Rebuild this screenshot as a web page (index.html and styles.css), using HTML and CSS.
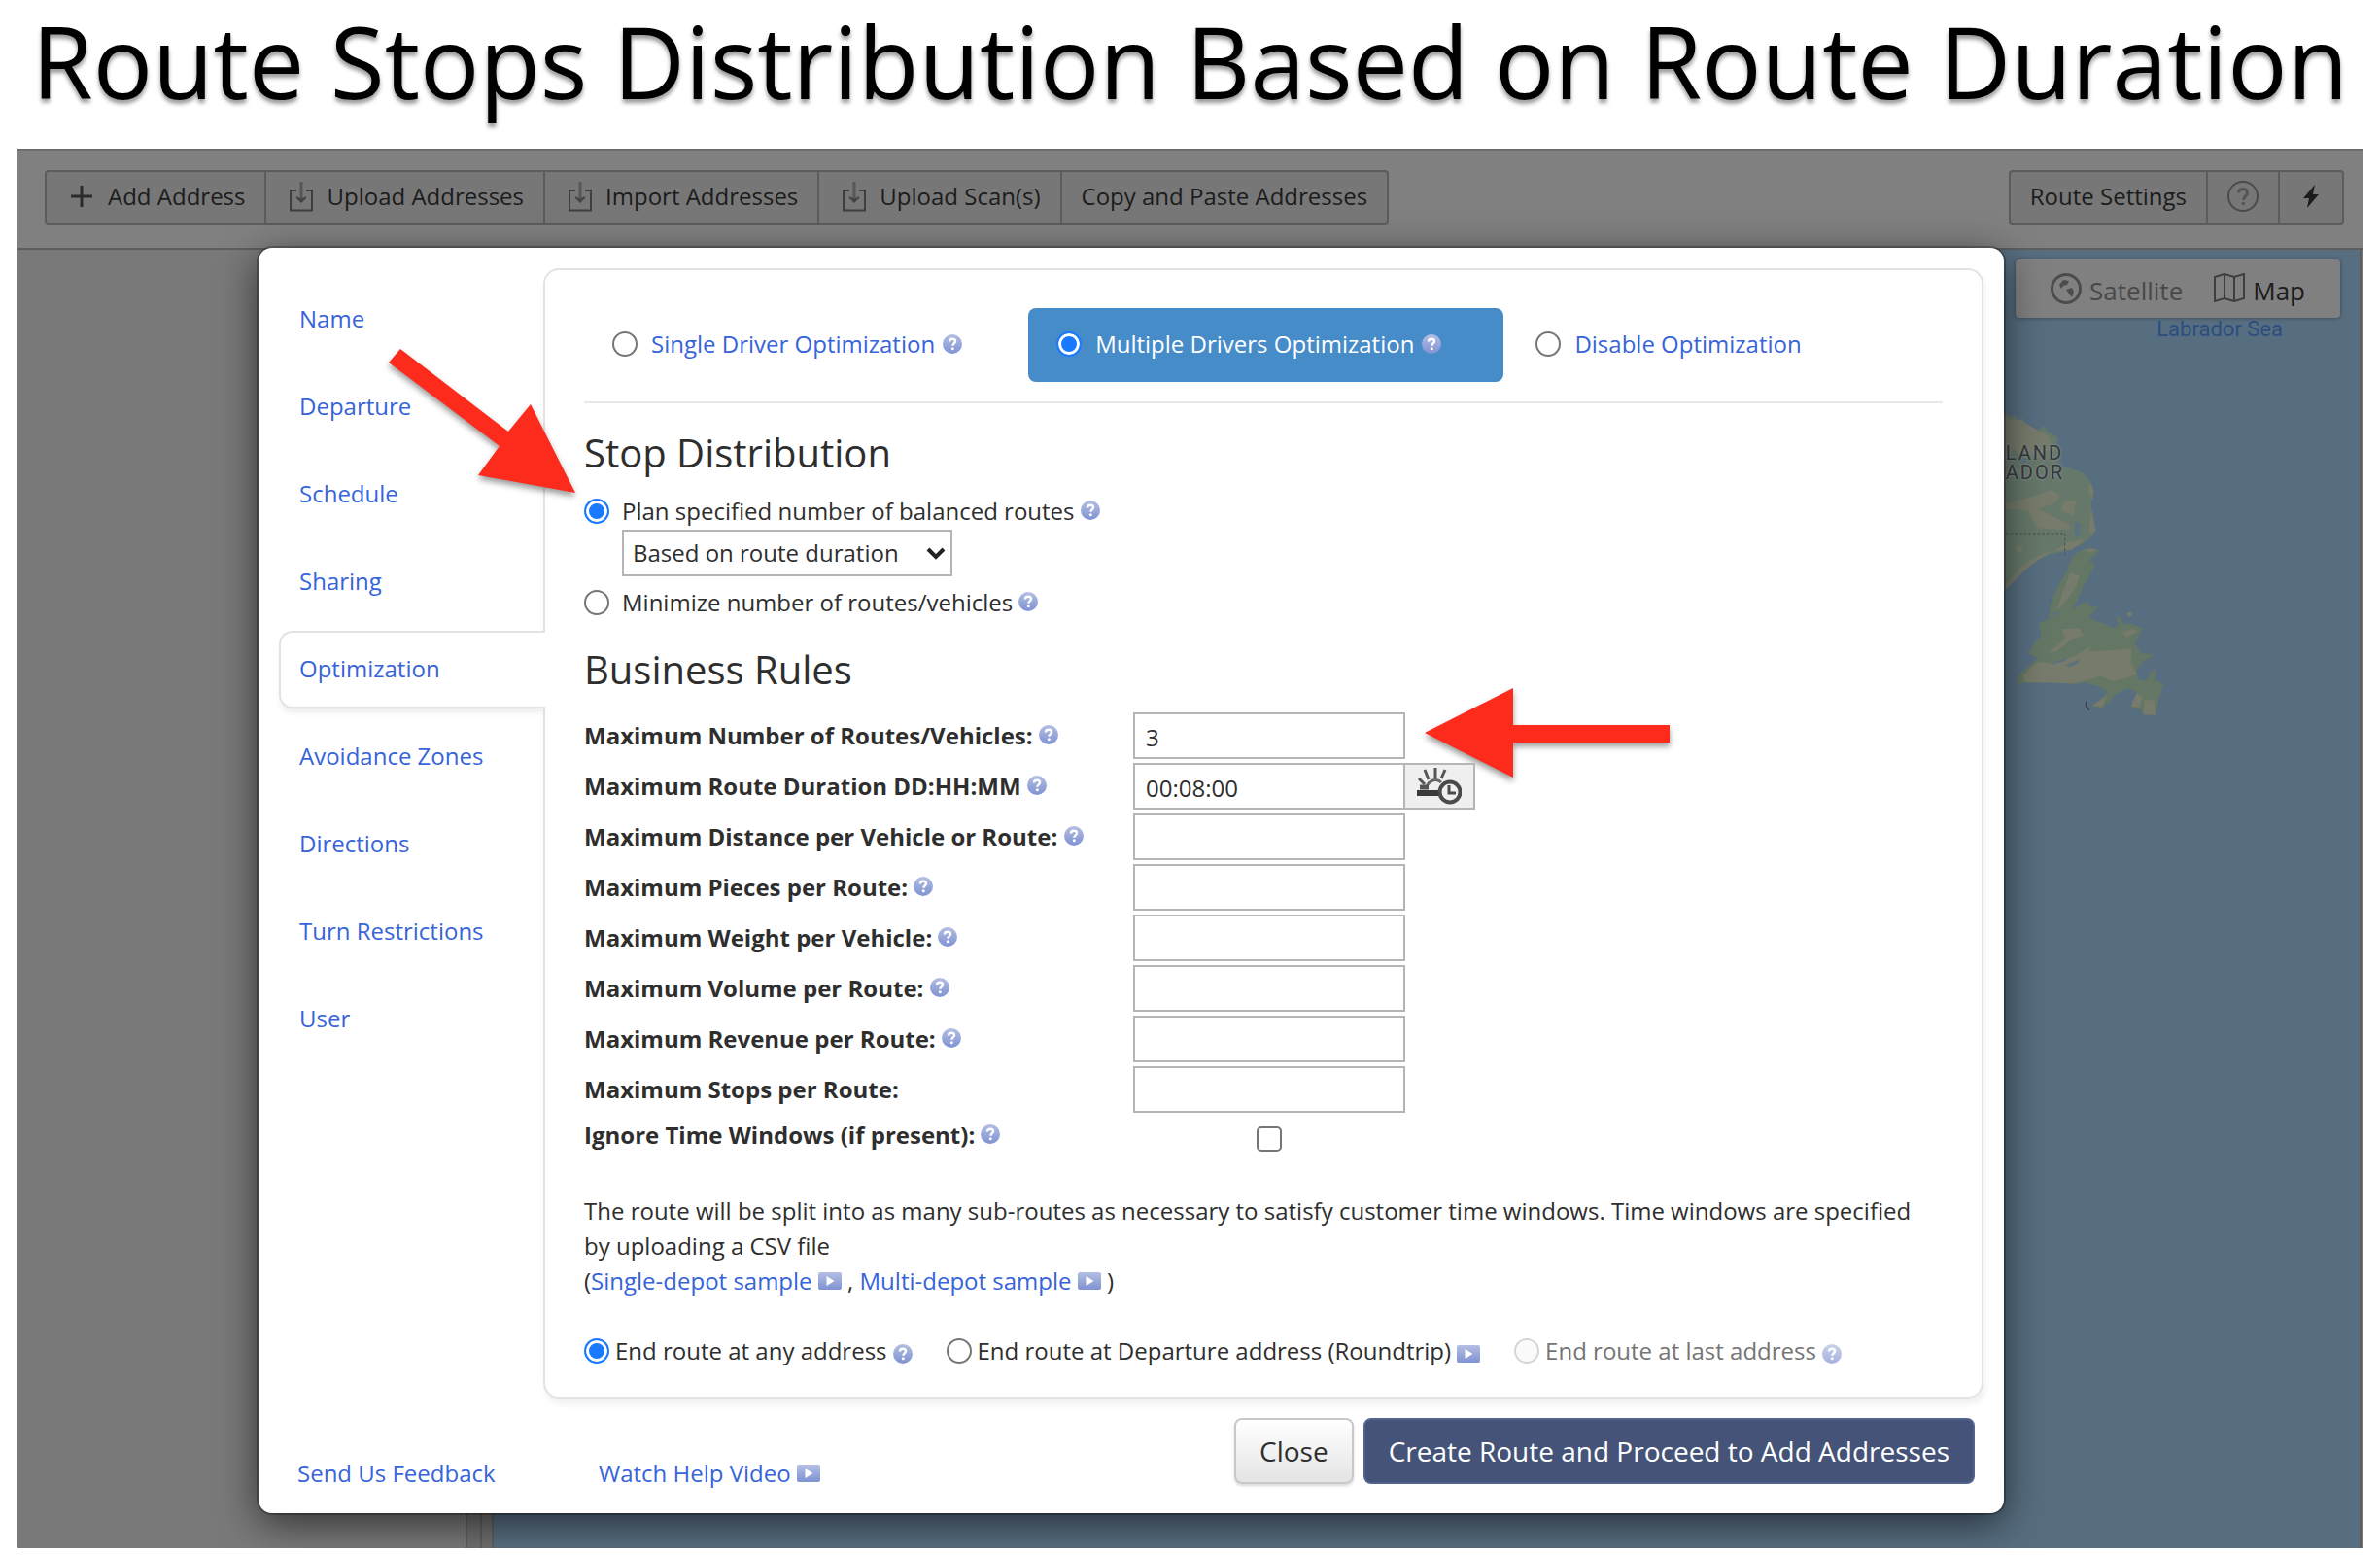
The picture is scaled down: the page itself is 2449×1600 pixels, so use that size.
FILE: index.html
```html
<!DOCTYPE html>
<html lang="en">
<head>
<meta charset="utf-8">
<title>Route Stops Distribution Based on Route Duration</title>
<link rel="stylesheet" href="styles.css">
</head>
<body>
<svg class="sprite" aria-hidden="true">
  <defs>
    <linearGradient id="badge-fill" x1="0" y1="0" x2="0" y2="1">
      <stop offset="0" stop-color="#b4bfe2"/>
      <stop offset="1" stop-color="#7f92d3"/>
    </linearGradient>
    <symbol id="help" viewBox="0 0 20 20">
      <circle cx="10" cy="10" r="10" fill="url(#badge-fill)"/>
      <path d="M7 7.6C7 5.6 8.3 4.8 10 4.8s3 .9 3 2.5c0 2-2.6 2.2-2.6 4.4" fill="none" stroke="#fff" stroke-width="2.4"/>
      <circle cx="10.3" cy="14.7" r="1.5" fill="#fff"/>
    </symbol>
    <symbol id="play" viewBox="0 0 24 18">
      <rect width="24" height="18" rx="2" fill="url(#badge-fill)"/>
      <path d="M8.500 4v10l8-5z" fill="#fff"/>
    </symbol>
    <symbol id="inbox" viewBox="0 0 26 32">
      <path d="M8 10H2v20.500h22V10h-6" fill="none" stroke="#3f3f3f" stroke-width="2"/>
      <path d="M13 1v18" stroke="#575757" stroke-width="3"/>
      <path d="M8 17l5 2.500 5-2.500-5 5z" fill="#444" stroke="#444" stroke-width="1.500"/>
    </symbol>
  </defs>
</svg>

<h1 class="title">Route Stops Distribution Based on Route Duration</h1>

<main class="app">
  <div class="backdrop">
    <header class="toolbar">
      <div class="button-group">
        <button type="button"><svg class="icon-plus" viewBox="0 0 22 22"><path d="M11 0v22M0 11h22" stroke="#2b2b2b" stroke-width="3"/></svg>Add Address</button>
        <button type="button"><svg class="icon-inbox"><use href="#inbox"/></svg>Upload Addresses</button>
        <button type="button"><svg class="icon-inbox"><use href="#inbox"/></svg>Import Addresses</button>
        <button type="button"><svg class="icon-inbox"><use href="#inbox"/></svg>Upload Scan(s)</button>
        <button type="button">Copy and Paste Addresses</button>
      </div>
      <div class="button-group">
        <button type="button">Route Settings</button>
        <button type="button" aria-label="Help"><svg class="icon-round" viewBox="0 0 32 32"><circle cx="16" cy="16" r="15" fill="none" stroke="#4b4b4b" stroke-width="2"/><path d="M11.500 12.500c0-3 2-4 4.500-4s4.500 1.300 4.500 4c0 3.500-4 3.500-4 7.500" fill="none" stroke="#555" stroke-width="3"/><circle cx="16.500" cy="23.500" r="1.800" fill="#555"/></svg></button>
        <button type="button" aria-label="Quick actions"><svg class="icon-bolt" viewBox="0 0 16 24"><path d="M12 0L0 14h6L4 24l12-14h-6z" fill="#1c1c1c"/></svg></button>
      </div>
    </header>
    <div class="workspace">
      <div class="route-list"></div>
      <div class="splitter"></div>
      <section class="map">
        <svg class="land" viewBox="300 510 540 890" preserveAspectRatio="none">
          <path d="M300 540L345 520L355 530L370 524L382 538L392 530L403 555L415 567L440 568L458 555L475 575L495 582L505 595L498 610L512 625L506 650L522 672L550 680L580 690L600 712L614 740L604 780L612 815L620 858L600 880L570 900L530 915L480 925L430 945L385 985L342 1026L300 1050z" fill="#66786a"/>
          <path d="M300 530L390 540L440 568L475 585L490 620L440 640L340 620L300 640zM340 780L420 760L480 740L510 755L490 780L440 795L530 835L545 855L440 850L410 800L345 795zM520 775L560 768L550 815L512 800zM600 715L614 742L608 770L596 735zM604 790L620 858L600 866zM530 890L590 880L545 912L495 915zM342 1010L390 960L440 930L490 915L440 942L390 980L342 1026zM370 900L395 902L390 920L375 916z" fill="#767b6b"/>
          <path d="M555 830l18 8-3 35-15 2zM385 655l25-8-10 20zM500 655l22 4-10 20z" fill="#5b7180"/>
          <path d="M342 865H524V928" fill="none" stroke="#4c554c" stroke-width="3" stroke-dasharray="8 6"/>
          <path d="M570 915L605 907L632 916L612 930L600 945L618 955L600 985L580 1020L562 1060L545 1085L580 1065L595 1060L603 1078L628 1075L612 1095L598 1105L620 1118L650 1125L672 1138L690 1130L682 1108L692 1105L705 1125L738 1128L765 1140L750 1165L740 1180L760 1212L795 1212L798 1218L765 1235L745 1260L752 1285L775 1290L790 1262L806 1258L800 1285L828 1300L815 1340L804 1388L765 1386L760 1372L728 1365L740 1340L750 1325L720 1310L680 1330L660 1350L640 1368L606 1362L640 1345L655 1320L625 1305L590 1295L550 1300L490 1293L440 1295L372 1298L385 1270L415 1245L440 1225L412 1210L430 1180L452 1160L445 1125L475 1110L480 1070L500 1020L530 975L545 935z" fill="#647664"/>
          <path d="M540 980L570 985L560 1015L525 1065L500 1085L515 1040zM580 910L622 910L605 922zM515 1140L570 1138L582 1160L545 1170L500 1205L470 1210L525 1170zM490 1240L560 1215L605 1190L600 1205L730 1198L728 1235L748 1272L700 1285L670 1290L630 1275L605 1285L550 1297L400 1293L395 1275L440 1235zM702 1150L735 1138L748 1148L715 1165zM745 1325L765 1335L755 1365L728 1362zM770 1345L800 1345L804 1388L765 1386zM610 1360L655 1330L640 1365zM715 1095l14-4 4 10-12 4z" fill="#767b6b"/>
          <path d="M480 1240l55-18-10 10-40 10zM525 1245l45-18-8 14-25 8zM485 1095l25-5-8 15z" fill="#5b7180"/>
          <path d="M590 1348v14l9 12" fill="none" stroke="#343b42" stroke-width="4"/>
        </svg>
        <span class="map-label region-label">LAND<br>ADOR</span>
        <span class="map-label sea-label">Labrador Sea</span>
        <div class="map-type">
          <button type="button" class="muted"><svg class="icon-round" viewBox="0 0 32 32"><circle cx="16" cy="16" r="14.500" fill="none" stroke="#4c4c4c" stroke-width="3"/><path d="M9 12l4-5 6 1-2 4-4 1-2 3zM16 17l6-2 2 4-2 6-3-4z" fill="#4c4c4c"/></svg>Satellite</button>
          <button type="button"><svg class="icon-map" viewBox="0 0 32 30"><path d="M1 4l10-3 10 3 10-3v25l-10 3-10-3-10 3zM11 1v25M21 4v25" fill="none" stroke="#3e3e3e" stroke-width="2"/></svg>Map</button>
        </div>
      </section>
    </div>
  </div>

  <section class="modal" role="dialog" aria-label="Route settings">
    <div class="modal-body">
      <nav class="tabs">
        <a href="#name">Name</a>
        <a href="#departure">Departure</a>
        <a href="#schedule">Schedule</a>
        <a href="#sharing">Sharing</a>
        <a href="#optimization" class="active">Optimization</a>
        <a href="#avoidance">Avoidance Zones</a>
        <a href="#directions">Directions</a>
        <a href="#turns">Turn Restrictions</a>
        <a href="#user">User</a>
      </nav>

      <form class="panel">
        <div class="modes">
          <label class="mode"><input type="radio" name="mode"><span>Single Driver Optimization</span><svg class="help"><use href="#help"/></svg></label>
          <label class="mode selected"><input type="radio" name="mode" checked><span>Multiple Drivers Optimization</span><svg class="help"><use href="#help"/></svg></label>
          <label class="mode"><input type="radio" name="mode"><span>Disable Optimization</span></label>
        </div>

        <h2>Stop Distribution</h2>
        <label class="choice"><input type="radio" name="distribution" checked><span>Plan specified number of balanced routes <svg class="help"><use href="#help"/></svg></span></label>
        <div class="select">
          <select aria-label="Balance routes">
            <option>Based on route duration</option>
          </select>
          <svg class="chevron" viewBox="0 0 20 14"><path d="M2 2l8 8 8-8" fill="none" stroke="#222" stroke-width="4"/></svg>
        </div>
        <label class="choice"><input type="radio" name="distribution"><span>Minimize number of routes/vehicles <svg class="help"><use href="#help"/></svg></span></label>

        <h2>Business Rules</h2>
        <div class="rules">
          <div class="rule">
            <label for="max-routes">Maximum Number of Routes/Vehicles: <svg class="help"><use href="#help"/></svg></label>
            <input type="text" id="max-routes" value="3">
            <svg class="arrow arrow-left" viewBox="0 0 252 92" aria-hidden="true"><path d="M0 46L91 0v38h161v18H91v36z"/></svg>
          </div>
          <div class="rule">
            <label for="max-duration">Maximum Route Duration DD:HH:MM <svg class="help"><use href="#help"/></svg></label>
            <input type="text" id="max-duration" value="00:08:00">
            <button type="button" class="addon" aria-label="Pick duration"><svg class="icon-time" viewBox="0 0 46 38"><path d="M19 10V0M12 12L8 2M8 17L2 11M25 11L29 2" stroke="#555" stroke-width="3"/><path d="M10 22a9 9 0 0 1 15-7" fill="none" stroke="#666" stroke-width="3"/><path d="M3 20h9" stroke="#555" stroke-width="5"/><path d="M0 26h24" stroke="#3a3a3a" stroke-width="6"/><circle cx="34" cy="25" r="10.500" fill="#efefef" stroke="#4a4a4a" stroke-width="4"/><path d="M33 18v8h7" fill="none" stroke="#4a4a4a" stroke-width="3"/></svg></button>
          </div>
          <div class="rule">
            <label for="max-distance">Maximum Distance per Vehicle or Route: <svg class="help"><use href="#help"/></svg></label>
            <input type="text" id="max-distance">
          </div>
          <div class="rule">
            <label for="max-pieces">Maximum Pieces per Route: <svg class="help"><use href="#help"/></svg></label>
            <input type="text" id="max-pieces">
          </div>
          <div class="rule">
            <label for="max-weight">Maximum Weight per Vehicle: <svg class="help"><use href="#help"/></svg></label>
            <input type="text" id="max-weight">
          </div>
          <div class="rule">
            <label for="max-volume">Maximum Volume per Route: <svg class="help"><use href="#help"/></svg></label>
            <input type="text" id="max-volume">
          </div>
          <div class="rule">
            <label for="max-revenue">Maximum Revenue per Route: <svg class="help"><use href="#help"/></svg></label>
            <input type="text" id="max-revenue">
          </div>
          <div class="rule">
            <label for="max-stops">Maximum Stops per Route:</label>
            <input type="text" id="max-stops">
          </div>
          <div class="rule rule-check">
            <label for="ignore-windows">Ignore Time Windows (if present): <svg class="help"><use href="#help"/></svg></label>
            <span class="check-cell"><input type="checkbox" id="ignore-windows"></span>
          </div>
        </div>

        <p class="note">The route will be split into as many sub-routes as necessary to satisfy customer time windows. Time windows are specified by uploading a CSV file<br>(<a href="#single">Single-depot sample <svg class="play"><use href="#play"/></svg></a> , <a href="#multi">Multi-depot sample <svg class="play"><use href="#play"/></svg></a> )</p>

        <div class="endings">
          <label class="ending"><input type="radio" name="ending" checked><span>End route at any address</span><svg class="help"><use href="#help"/></svg></label>
          <label class="ending"><input type="radio" name="ending"><span>End route at Departure address (Roundtrip)</span><svg class="play"><use href="#play"/></svg></label>
          <label class="ending disabled"><input type="radio" name="ending" disabled><span>End route at last address</span><svg class="help"><use href="#help"/></svg></label>
        </div>

        <svg class="arrow arrow-down" viewBox="0 0 192 148" aria-hidden="true"><path d="M0 14L12 0L123 85L146 57L192 148L92 130L114 100z"/></svg>
      </form>
    </div>

    <footer class="modal-footer">
      <div class="footer-links">
        <a href="#feedback">Send Us Feedback</a>
        <a href="#video">Watch Help Video <svg class="play"><use href="#play"/></svg></a>
      </div>
      <div class="actions">
        <button type="button" class="close">Close</button>
        <button type="submit" class="primary">Create Route and Proceed to Add Addresses</button>
      </div>
    </footer>
  </section>
</main>
</body>
</html>
```
FILE: styles.css
```css
* {
  box-sizing: border-box;
}

body {
  margin: 0;
  background: #fff;
  color: #2e2e2e;
  font-family: "Open Sans", "Noto Sans", sans-serif;
  font-size: 24px;
  line-height: 36px;
}

button,
input,
select {
  margin: 0;
  font: inherit;
  color: inherit;
}

a {
  color: #3764d9;
  text-decoration: none;
}

.sprite {
  display: block;
  width: 0;
  height: 0;
}

.title {
  margin: 0;
  padding-bottom: 27px;
  color: #000;
  font-size: 102px;
  font-weight: 400;
  line-height: 126px;
  text-align: center;
  white-space: nowrap;
  text-shadow: 0 4px 4px rgba(0, 0, 0, 0.4);
}

/* The dialog and the dimmed application share one grid cell */
.app {
  display: grid;
  margin: 0 17px 7px 18px;
  overflow: hidden;
}

.backdrop,
.modal {
  grid-area: 1 / 1;
}

.backdrop {
  display: flex;
  flex-direction: column;
  background: #808080;
  color: #1c1c1c;
}

.toolbar {
  display: flex;
  justify-content: space-between;
  padding: 20px 20px 24px 28px;
  border-top: 2px solid #6d6d6d;
  border-bottom: 2px solid #5e5e5e;
}

.button-group {
  display: flex;
  border: 2px solid #5c5c5c;
  border-radius: 4px;
  background: #777;
}

.button-group button {
  display: flex;
  align-items: center;
  height: 52px;
  padding: 0 20px 2px;
  border: 0;
  background: none;
}

.button-group button + button {
  border-left: 2px solid #5c5c5c;
}

.icon-plus {
  width: 22px;
  height: 22px;
  margin: 0 16px 0 5px;
}

.icon-inbox {
  width: 26px;
  height: 32px;
  margin: 0 13px 0 3px;
}

.icon-round {
  width: 32px;
  height: 32px;
}

.icon-bolt {
  width: 16px;
  height: 24px;
  margin: 0 4px;
}

.workspace {
  display: flex;
  flex: 1;
  border-right: 2px solid #777;
}

.route-list {
  width: 461px;
  background: #797979;
}

.splitter {
  width: 29px;
  border: solid #5f5f5f;
  border-width: 0 2px;
  background: linear-gradient(to right, #6f6f6f 13px, #5f5f5f 13px 15px, #6f6f6f 15px);
}

.map {
  position: relative;
  flex: 1;
  border-right: 2px solid #5e5e5e;
  background: #576e81;
}

.land {
  position: absolute;
  top: 165px;
  right: 198px;
  width: 180px;
  height: 318px;
}

.map-label {
  position: absolute;
  font-family: Roboto, sans-serif;
}

.region-label {
  top: 199px;
  right: 304px;
  color: #33393b;
  font-size: 20px;
  line-height: 20px;
  letter-spacing: 2px;
  text-shadow: 0 0 3px #84898a, 0 0 3px #84898a;
}

.sea-label {
  top: 64px;
  right: 79px;
  color: #2c4e7e;
  font-size: 22px;
}

.map-type {
  position: absolute;
  top: 10px;
  right: 20px;
  display: flex;
  gap: 32px;
  padding: 12px 36px 10px;
  border-radius: 4px;
  background: #808080;
  box-shadow: 0 0 4px rgba(0, 0, 0, 0.4);
}

.map-type button {
  display: flex;
  align-items: flex-start;
  gap: 8px;
  height: 38px;
  padding: 2px 0 0;
  border: 0;
  background: none;
  font-size: 26px;
}

.map-type .muted {
  color: #494949;
}

.icon-map {
  width: 32px;
  height: 30px;
}

.modal {
  z-index: 1;
  margin: 102px 370px 36px 248px;
  border-radius: 14px;
  background: #fff;
  box-shadow: 0 0 0 2px rgba(0, 0, 0, 0.25), 0 10px 40px rgba(0, 0, 0, 0.6);
}

.modal-body {
  display: flex;
  padding: 21px 21px 0;
}

.tabs {
  z-index: 1;
  width: 272px;
  padding-top: 13px;
}

.tabs a {
  display: flex;
  align-items: center;
  height: 80px;
  margin-bottom: 10px;
  padding: 0 0 2px 21px;
}

.tabs .active {
  margin-right: -2px;
  padding-left: 19px;
  border: 2px solid #e3e3e3;
  border-right: 0;
  border-radius: 14px 0 0 14px;
  background: #fff;
  box-shadow: 0 6px 6px -2px rgba(0, 0, 0, 0.08);
  clip-path: inset(0 0 -20px -20px);
}

.panel {
  position: relative;
  flex: 1;
  padding: 39px 40px 29px;
  border: 2px solid #e3e3e3;
  border-radius: 16px;
  box-shadow: 2px 6px 6px rgba(0, 0, 0, 0.06);
}

input[type="radio"],
input[type="checkbox"] {
  flex: none;
  width: 26px;
  height: 26px;
  border: 2px solid #767676;
  background: #fff;
  appearance: none;
}

input[type="radio"] {
  border-radius: 50%;
}

input[type="checkbox"] {
  border-radius: 5px;
}

input[type="radio"]:checked {
  border-color: #1a7aff;
  background: #1a7aff;
  box-shadow: inset 0 0 0 3px #fff;
}

.help {
  width: 20px;
  height: 20px;
}

.play {
  width: 24px;
  height: 18px;
}

.modes {
  display: flex;
  gap: 4px;
  padding-bottom: 20px;
  border-bottom: 2px solid #e8e8e8;
}

.mode {
  display: flex;
  align-items: center;
  height: 76px;
  padding: 0 64px 2px 29px;
  border-radius: 8px;
  color: #3764d9;
}

.mode span {
  margin: 0 8px 0 14px;
}

.mode.selected {
  background: #468cc8;
  color: #fff;
}

h2 {
  margin: 24px 0 15px;
  font-size: 40px;
  font-weight: 400;
  line-height: 54px;
}

.choice {
  display: flex;
  align-items: center;
  gap: 13px;
}

.select {
  position: relative;
  width: 340px;
  margin: 1px 0 9px 39px;
}

.select select {
  display: block;
  width: 100%;
  height: 48px;
  padding: 0 9px;
  border: 2px solid #b5b5b5;
  border-radius: 0;
  background: #fff;
  appearance: none;
}

.chevron {
  position: absolute;
  top: 18px;
  right: 7px;
  width: 20px;
  height: 14px;
  pointer-events: none;
}

.rules {
  display: grid;
  gap: 4px;
  padding-top: 2px;
}

.rule {
  position: relative;
  display: flex;
  align-items: center;
}

.rule label {
  width: 565px;
  font-weight: 700;
}

.rule input[type="text"] {
  width: 280px;
  height: 48px;
  padding: 2px 11px 0;
  border: 2px solid #b5b5b5;
  background: #fff;
}

.addon {
  display: flex;
  align-items: center;
  justify-content: center;
  width: 74px;
  height: 48px;
  margin-left: -2px;
  padding: 0;
  border: 2px solid #b5b5b5;
  background: #efefef;
}

.icon-time {
  width: 46px;
  height: 38px;
}

.rule-check {
  align-items: flex-start;
}

.rule-check label {
  padding-top: 1px;
}

.check-cell {
  display: flex;
  align-items: center;
  justify-content: center;
  width: 280px;
  height: 46px;
}

.note {
  margin: 33px 0 36px;
}

.endings {
  display: flex;
  gap: 35px;
}

.ending {
  display: flex;
  align-items: center;
}

.ending span {
  margin: 0 6px;
}

.ending .help,
.ending .play {
  margin-top: 6px;
}

.ending.disabled {
  color: #757575;
}

.disabled input[type="radio"] {
  border-color: #d6d6d6;
  background: #fafafa;
}

.disabled .help {
  opacity: 0.7;
}

.arrow {
  position: absolute;
  overflow: visible;
  fill: #fc2b1c;
  filter: drop-shadow(0 4px 3px rgba(0, 0, 0, 0.4));
}

.arrow-left {
  top: -25px;
  left: 865px;
  width: 252px;
  height: 92px;
}

.arrow-down {
  top: 81px;
  left: -161px;
  z-index: 2;
  width: 192px;
  height: 148px;
}

.modal-footer {
  display: flex;
  justify-content: space-between;
  padding: 20px 30px 23px 40px;
}

.footer-links {
  display: grid;
  grid-template-columns: 310px auto;
  margin-top: 39px;
}

.actions {
  display: flex;
  align-items: flex-start;
  gap: 10px;
}

.actions button {
  height: 68px;
  padding: 0 24px;
  border: 2px solid #c8c8c8;
  border-radius: 8px;
  font-size: 28px;
}

.actions .close {
  background: linear-gradient(#fff, #e4e4e4);
  box-shadow: 0 2px 3px rgba(0, 0, 0, 0.15);
}

.actions .primary {
  border-color: #526390;
  background: #445377;
  color: #fff;
}
```
